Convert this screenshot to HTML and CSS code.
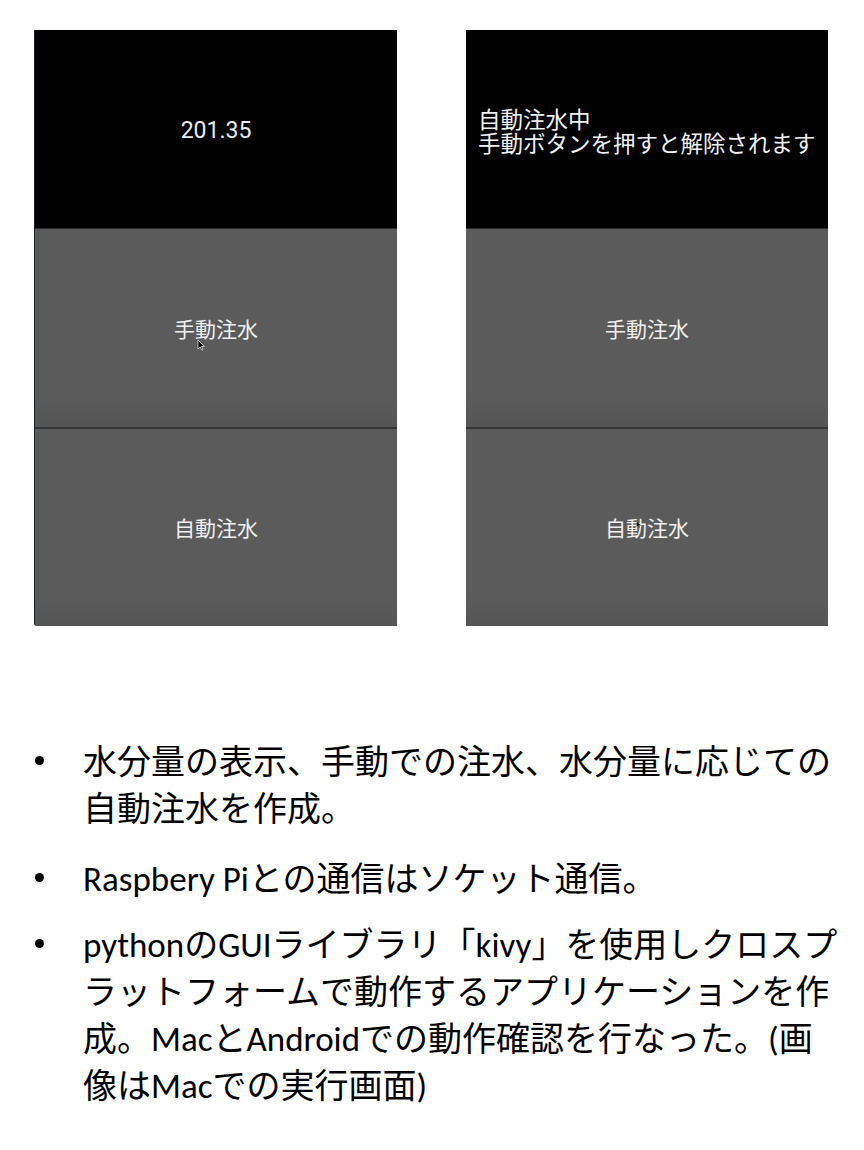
FILE: index.html
```html
<!DOCTYPE html>
<html lang="ja">
<head>
<meta charset="utf-8">
<link rel="stylesheet" href="styles.css">
</head>
<body>
<div class="screens">
  <div class="screen screen-left">
    <div class="display"><span class="value">201.35</span></div>
    <div class="btn">手動注水
      <svg class="cursor cursor-a" width="9" height="12" viewBox="0 0 9 12"><path d="M1 1 L1 10 L3.2 8 L4.8 11.2 L6 10.6 L4.5 7.5 L7.5 7.5 Z" fill="#000" stroke="#ddd" stroke-width="0.8"/></svg>
    </div>
    <div class="btn">自動注水</div>
  </div>
  <div class="screen">
    <div class="display display-msg"><p class="msg">自動注水中<br>手動ボタンを押すと解除されます</p></div>
    <div class="btn">手動注水</div>
    <div class="btn">自動注水
      <svg class="cursor cursor-b" width="6" height="9" viewBox="0 0 9 12"><path d="M1 1 L1 10 L3.2 8 L4.8 11.2 L6 10.6 L4.5 7.5 L7.5 7.5 Z" fill="#000" stroke="#bbb" stroke-width="0.6"/></svg>
    </div>
  </div>
</div>
<ul class="points">
  <li><span>水分量の表示、手動での注水、水分量に応じての<br>自動注水を作成。</span></li>
  <li><span><span class="lat">Raspbery Pi</span>との通信はソケット通信。</span></li>
  <li><span><span class="lat">python</span>の<span class="lat">GUI</span>ライブラリ「<span class="lat">kivy</span>」を使用しクロスプ<br>ラットフォームで動作するアプリケーションを作<br>成。<span class="lat">Mac</span>と<span class="lat">Android</span>での動作確認を行なった。<span class="lat">(</span>画<br>像は<span class="lat">Mac</span>での実行画面<span class="lat">)</span></span></li>
</ul>
</body>
</html>
```
FILE: styles.css
```css
html, body {
  margin: 0;
  padding: 0;
  background: #fff;
}
body {
  width: 864px;
  height: 1150px;
  overflow: hidden;
  font-family: "Noto Sans CJK JP", sans-serif;
}
.screens {
  display: flex;
  gap: 69px;
  padding: 30px 0 0 35px;
}
.screen {
  width: 362px;
  height: 596px;
  display: flex;
  flex-direction: column;
  background: #5a5a5a;
}
.screen-left {
  box-shadow: -1px 0 0 #16202c;
  border-bottom-left-radius: 3px;
  overflow: hidden;
}
.display {
  height: 198px;
  background: #000;
  display: flex;
  align-items: center;
  justify-content: center;
  border-bottom: 1px solid #2a2a2a;
}
.value {
  font-family: Roboto, "Noto Sans", sans-serif;
  font-size: 23px;
  color: #ececec;
  padding-top: 3px;
}
.display-msg {
  justify-content: flex-start;
  padding-left: 12px;
}
.msg {
  margin: 0;
  padding-top: 2px;
  color: #f2f2f2;
  font-size: 22.5px;
  line-height: 24px;
  font-family: "Noto Sans CJK JP", "DejaVu Sans", sans-serif;
}
.btn {
  position: relative;
  flex: 1;
  display: flex;
  align-items: center;
  justify-content: center;
  color: #f0f0f0;
  font-size: 21px;
  font-family: "Noto Sans CJK JP", sans-serif;
  background: linear-gradient(#5b5b5b, #5b5b5b 85%, #555 100%);
}
.btn + .btn {
  border-top: 2px solid #353535;
}
.cursor {
  position: absolute;
}
.cursor-a {
  left: 162px;
  top: 110px;
}
.cursor-b {
  left: 170px;
  top: 91px;
}
.points {
  list-style: none;
  margin: 110px 0 0 0;
  padding: 0 0 0 35px;
  font-size: 34px;
  line-height: 47px;
  color: #000;
}
.points li {
  display: flex;
  margin-bottom: 19px;
}
.points li:first-child {
  margin-bottom: 23px;
}
.points li::before {
  content: "";
  flex: none;
  width: 9px;
  height: 9px;
  border-radius: 50%;
  background: #000;
  margin-top: 20px;
  margin-right: 39px;
}
.lat {
  font-family: Carlito, "Liberation Sans Narrow", "Liberation Sans", sans-serif;
  font-size: 35px;
  line-height: 1;
}
```
